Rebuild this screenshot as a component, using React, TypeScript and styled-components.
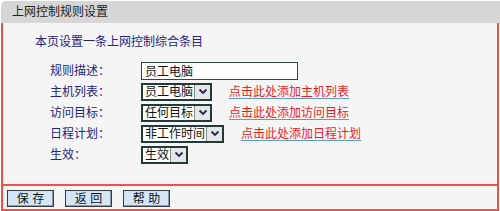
import * as React from 'react'
import styled, { createGlobalStyle } from 'styled-components'

const GlobalStyle = createGlobalStyle`
  html, body {
    margin: 0;
    padding: 0;
    background: #ffffff;
  }
  body {
    font-family: "Liberation Sans", "Noto Sans CJK SC", sans-serif;
    font-size: 12px;
  }
  * {
    box-sizing: border-box;
  }
`

const RED = '#ec5248'
const NAVY = '#24247a'

const Page = styled.div`
  width: 500px;
  height: 211px;
  padding: 1px 0 0 1px;
`

const Header = styled.div`
  height: 22px;
  line-height: 22px;
  padding-left: 11px;
  background: #d6d6d6;
  border-top-left-radius: 5px;
  color: #222;
  font-size: 12px;
`

const Panel = styled.div`
  width: 498px;
  background: #f5f5f5;
  border-left: 2px solid ${RED};
  border-right: 2px solid ${RED};
  border-bottom: 2px solid ${RED};
`

const Content = styled.div`
  height: 161px;
  padding: 11px 0 0 32px;
`

const Intro = styled.div`
  line-height: 16px;
  color: ${NAVY};
  margin-bottom: 10px;
`

const Form = styled.div`
  padding-left: 15px;
`

const Row = styled.div`
  display: flex;
  align-items: center;
  height: 21px;
`

const Label = styled.div`
  width: 91px;
  color: ${NAVY};
  line-height: 16px;
`

const TextInput = styled.input`
  width: 157px;
  height: 18px;
  border: 1px solid #2b4848;
  padding: 0 3px;
  font-family: inherit;
  font-size: 12px;
  color: #111;
  background: #fff;
  outline: none;
`

const Select = styled.div`
  display: inline-flex;
  height: 18px;
  border: 2px solid #213a3a;
  background: #fff;
`

const SelectText = styled.span`
  display: flex;
  align-items: center;
  padding: 0 1px 0 2px;
  font-size: 12px;
  line-height: 14px;
  color: #111;
  white-space: nowrap;
`

const SelectArrow = styled.span`
  width: 16px;
  display: flex;
  align-items: center;
  justify-content: center;
  background: #e6e6e6;
  border-left: 1px solid #8c8c8c;
`

const AddLink = styled.a<{ $gap: number }>`
  margin-left: ${p => p.$gap}px;
  color: #f01c1c;
  text-decoration: underline;
  text-decoration-color: #5b9bd5;
  text-decoration-thickness: 1px;
  text-underline-offset: 2px;
  line-height: 16px;
  cursor: pointer;
`

const Footer = styled.div`
  height: 25px;
  border-top: 2px solid ${RED};
  display: flex;
  gap: 11px;
  padding: 4px 0 0 4px;
`

const Button = styled.button`
  width: 47px;
  height: 17px;
  padding: 0;
  background: #d3e6f8;
  border: 1px solid #3a3a3a;
  box-shadow: inset -1px -1px 0 #8a9aa8;
  font-family: inherit;
  font-size: 12px;
  line-height: 14px;
  color: #111;
  white-space: pre;
`

const Chevron = () => (
  <svg width="10" height="7" viewBox="0 0 10 7">
    <polyline
      points="1.5,1.5 5,5 8.5,1.5"
      fill="none"
      stroke="#1c2a5a"
      strokeWidth="1.8"
    />
  </svg>
)

const Dropdown = ({ value }: { value: string }) => (
  <Select>
    <SelectText>{value}</SelectText>
    <SelectArrow>
      <Chevron />
    </SelectArrow>
  </Select>
)

const rows = [
  { label: '主机列表：', value: '员工电脑', link: '点击此处添加主机列表' },
  { label: '访问目标：', value: '任何目标', link: '点击此处添加访问目标' },
  { label: '日程计划：', value: '非工作时间', link: '点击此处添加日程计划' },
  { label: '生效：', value: '生效', link: '' },
]

export default function App() {
  return (
    <Page>
      <GlobalStyle />
      <Header>上网控制规则设置</Header>
      <Panel>
        <Content>
          <Intro>本页设置一条上网控制综合条目</Intro>
          <Form>
            <Row>
              <Label>规则描述：</Label>
              <TextInput defaultValue="员工电脑" />
            </Row>
            {rows.map(r => (
              <Row key={r.label}>
                <Label>{r.label}</Label>
                <Dropdown value={r.value} />
                {r.link && <AddLink $gap={17}>{r.link}</AddLink>}
              </Row>
            ))}
          </Form>
        </Content>
        <Footer>
          <Button>保 存</Button>
          <Button>返 回</Button>
          <Button>帮 助</Button>
        </Footer>
      </Panel>
    </Page>
  )
}
